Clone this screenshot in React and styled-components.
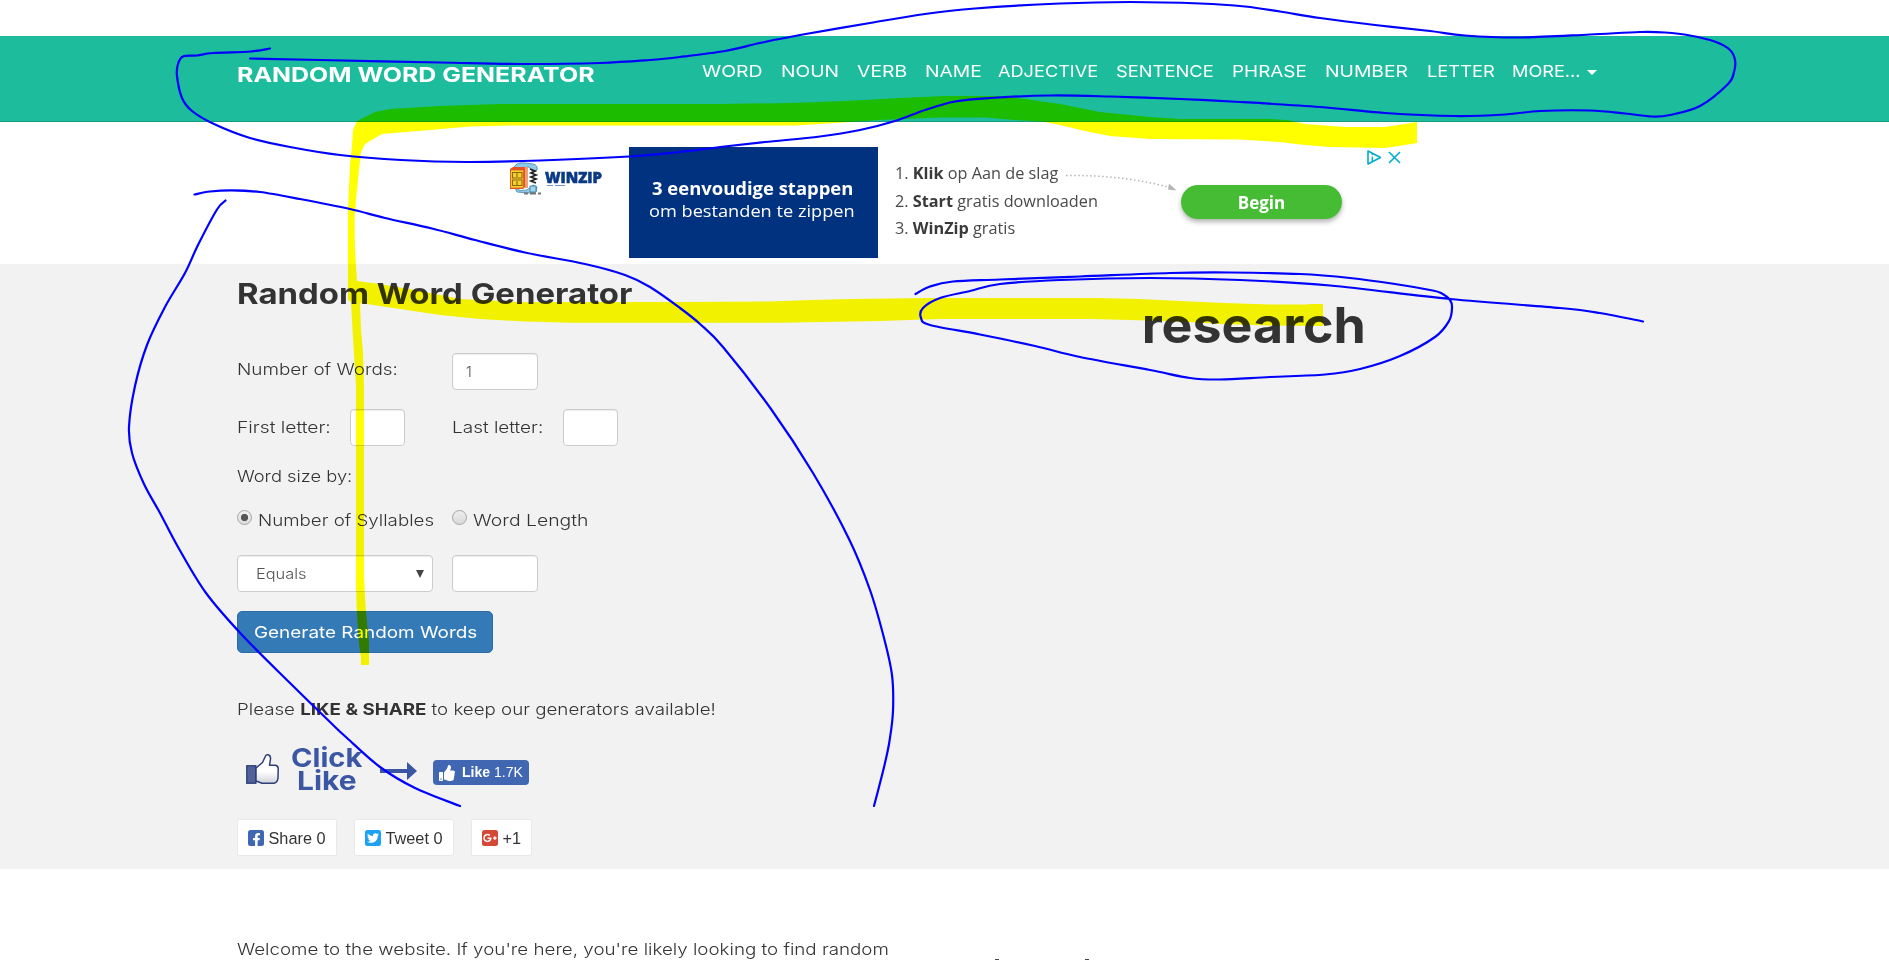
import React from 'react';
import styled, { createGlobalStyle, css } from 'styled-components';
import { FaFacebookF, FaTwitter, FaGooglePlusG, FaThumbsUp } from 'react-icons/fa';

const GlobalStyle = createGlobalStyle`
  * { box-sizing: border-box; }
  html, body { margin: 0; padding: 0; background: #fff; }
  body {
    font-family: Inter, 'Noto Sans', sans-serif;
    font-size: 16.5px;
    line-height: 24px;
    font-weight: 300;
    color: #333;
  }
`;

const wide = css`
  display: inline-block;
  white-space: nowrap;
  transform-origin: ${(p) => p.$origin || 'left'} center;
  transform: scaleX(${(p) => p.$sx || 1.145});
`;

const Page = styled.div`
  position: relative;
  width: 1889px;
  height: 960px;
  overflow: hidden;
  padding-top: 36px;
  background: #fff;
`;

const Header = styled.header`
  display: flex;
  align-items: flex-start;
  height: 86px;
  padding: 23px 0 0 236.5px;
  background: #1cbc9c;
  border-bottom: 1px solid #179c82;
  color: #fff;
`;

const BrandCell = styled.div`
  width: 465.5px;
`;

const Brand = styled.span`
  ${wide}
  font-size: 20.5px;
  line-height: 31px;
  font-weight: 700;
`;

const Nav = styled.nav`
  display: flex;
`;

const NavItem = styled.div`
  width: ${(p) => p.$pitch}px;
  flex: none;
`;

const NavLink = styled.span`
  ${wide}
  font-weight: 400;
`;

const CaretCell = styled.div`
  padding-top: 11px;
`;

const Caret = styled.div`
  width: 0;
  height: 0;
  border: 5px solid transparent;
  border-top-color: #fff;
  border-bottom: 0;
`;

const AdSlot = styled.section`
  display: flex;
  align-items: flex-start;
  height: 142px;
  padding: 25px 0 0 509px;
  font-family: 'Open Sans', sans-serif;
`;

const AdLogo = styled.div`
  width: 120px;
  padding-top: 14px;
  svg { display: block; }
`;

const AdBlue = styled.div`
  width: 249px;
  height: 111px;
  padding: 31px 0 0 20px;
  background: #00327f;
  color: #fff;
  font-size: 17px;
  line-height: 22px;
`;

const AdLine = styled.div`
  width: max-content;
  margin-left: ${(p) => p.$indent || 0}px;
  font-weight: ${(p) => (p.$bold ? 700 : 400)};
  transform: scaleX(${(p) => p.$sx});
  transform-origin: left;
`;

const AdSteps = styled.div`
  position: relative;
  width: 303px;
  padding: 13px 0 0 17px;
  font-size: 16.25px;
  line-height: 27.5px;
  font-weight: 400;
  color: #4a4a4a;
  white-space: nowrap;
  b { font-weight: 700; color: #3a3a3a; }
`;

const StepArrow = styled.svg`
  position: absolute;
  left: 184px;
  top: 22px;
`;

const AdButton = styled.div`
  width: 161px;
  height: 34px;
  margin-top: 38px;
  border-radius: 17px;
  background: #46bc35;
  box-shadow: 0 3px 5px rgba(0, 0, 0, 0.3);
  color: #fff;
  font-size: 17px;
  font-weight: 700;
  line-height: 35px;
  text-align: center;
`;

const AdChoices = styled.svg`
  margin: 2px 0 0 24px;
`;

const Main = styled.main`
  display: grid;
  grid-template-columns: 708px 618px;
  height: 605px;
  padding-left: 237px;
  background: #f2f2f2;
`;

const FormColumn = styled.div`
  padding-top: 10px;
`;

const Title = styled.h1`
  ${wide}
  display: block;
  width: max-content;
  margin: 0 0 39px;
  font-size: 29px;
  line-height: 40px;
  font-weight: 700;
`;

const FormRow = styled.div`
  display: grid;
  grid-template-columns: ${(p) => p.$cols || '215px 86px'};
  align-items: start;
  margin-bottom: ${(p) => p.$after}px;
`;

const Label = styled.div`
  padding-top: ${(p) => p.$drop || 0}px;
`;

const WideText = styled.span`
  ${wide}
  b { font-weight: 700; }
`;

const Field = styled.div`
  display: flex;
  align-items: center;
  justify-content: space-between;
  height: 37px;
  padding: 0 8px 0 13px;
  background: #fff;
  border: 1px solid #ccc;
  border-radius: 4px;
  box-shadow: inset 0 1px 1px rgba(0, 0, 0, 0.075);
  font-size: 14.7px;
  color: #555;
`;

const Select = styled(Field)`
  width: 196px;
  padding: 0 8px 0 18px;
`;

const SelectArrow = styled.div`
  width: 0;
  height: 0;
  border: 4px solid transparent;
  border-top: 8px solid #444;
  border-bottom: 0;
`;

const Option = styled.div`
  display: flex;
  align-items: flex-start;
  gap: 6px;
`;

const Radio = styled.span`
  flex: none;
  width: 15px;
  height: 15px;
  margin-top: 2px;
  border: 1px solid #a5a5a5;
  border-radius: 50%;
  background: ${(p) =>
    p.$on
      ? 'radial-gradient(circle, #555 0 3.3px, transparent 4px), linear-gradient(#f0f0f0, #ddd)'
      : 'linear-gradient(#eee, #d9d9d9)'};
`;

const Submit = styled.div`
  width: 256px;
  height: 42px;
  margin-bottom: 44px;
  padding-left: 15.5px;
  border: 1px solid #2e6da4;
  border-radius: 5px;
  background: #337ab7;
  color: #fff;
  font-weight: 400;
  line-height: 40px;
`;

const LikeRow = styled.div`
  display: flex;
  align-items: flex-start;
  height: 50px;
  margin: 24px 0;
  svg { display: block; flex: none; }
`;

const ThumbCell = styled.div`
  width: 54px;
  padding: 8px 0 0 8px;
`;

const ClickLike = styled.div`
  width: 89px;
  padding-top: 1px;
  font-size: 26px;
  line-height: 23.3px;
  font-weight: 700;
  color: #3b57a4;
`;

const ClickWord = styled.div`
  ${wide}
  display: block;
  margin-left: ${(p) => p.$indent || 0}px;
`;

const ArrowCell = styled.div`
  width: 53px;
  padding-top: 16px;
`;

const LikeButton = styled.div`
  display: flex;
  align-items: center;
  width: 96px;
  height: 25px;
  margin-top: 15px;
  padding-left: 6px;
  border-radius: 4px;
  background: #4267b2;
  color: #fff;
  font: 14px/25px 'Liberation Sans', Arial, sans-serif;
  white-space: nowrap;
  b { margin: 0 4px 0 7px; }
`;

const ShareRow = styled.div`
  display: flex;
  gap: 17px;
`;

const ShareButton = styled.div`
  display: flex;
  align-items: center;
  gap: 4.5px;
  width: ${(p) => p.$w}px;
  height: 37px;
  padding-left: 10px;
  border: 1px solid #e9e9e9;
  border-radius: 2px;
  background: #fff;
  font: 16.3px/36px 'Liberation Sans', Arial, sans-serif;
  white-space: nowrap;
`;

const Badge = styled.span`
  display: flex;
  align-items: ${(p) => p.$align || 'center'};
  justify-content: ${(p) => (p.$align ? 'flex-end' : 'center')};
  width: 16px;
  height: 16px;
  padding-right: ${(p) => (p.$align ? 1 : 0)}px;
  border-radius: 2.5px;
  background: ${(p) => p.$bg};
  color: #fff;
`;

const ResultColumn = styled.div`
  padding-top: 32px;
  text-align: center;
`;

const Result = styled.span`
  ${wide}
  font-size: 49px;
  line-height: 60px;
  font-weight: 700;
`;

const Article = styled.section`
  display: flex;
  height: 91px;
  padding-left: 237px;
`;

const Intro = styled.div`
  width: 758px;
  padding-top: 68px;
`;

/* Tips of the next heading's tallest letters, just above the fold. */
const HeadingTips = styled.div`
  display: flex;
  gap: 86px;
  align-self: flex-end;
`;

const Tip = styled.span`
  width: 4px;
  height: 1px;
  background: #444;
`;

const Ink = styled.svg`
  position: absolute;
  left: 0;
  top: 0;
  pointer-events: none;
  mix-blend-mode: ${(p) => (p.$highlight ? 'multiply' : 'normal')};
`;

const NAV = [
  ['WORD', 78.5, 1.18],
  ['NOUN', 76.5, 1.165],
  ['VERB', 67.5, 1.175],
  ['NAME', 73.5, 1.168],
  ['ADJECTIVE', 117.5, 1.1],
  ['SENTENCE', 116.5, 1.112],
  ['PHRASE', 93, 1.146],
  ['NUMBER', 101.5, 1.17],
  ['LETTER', 85.5, 1.108],
  ['MORE...', 74.5, 1.1],
];

const HEADER_LOOP = [
  [270,48.5],[251,51.5],[213,53],[197,55.5],[183,56.5],[178,64],[177,76],[182,98],[192,111],[214,124],[250,138],[290,147],[340,155],[401,160],[467,162],[540,160.5],[629,156.5],[680,152],[720,147],[765,142],[820,136.5],[860,130],[895,121],[925,110],[955,101.5],[990,98],[1050,95.5],[1110,96.5],[1180,99],[1240,102],[1320,107],[1385,113],[1455,116],[1505,114.5],[1540,111],[1590,110.5],[1625,113.5],[1652,116.5],[1670,115],[1700,106],[1728,84],[1734,72],[1735,60],[1730,50],[1716,42],[1690,35.5],[1665,32.5],[1640,32],[1590,34.5],[1520,37.5],[1465,35.5],[1430,31],[1375,25],[1320,18],[1280,11.5],[1245,6.5],[1200,3.5],[1130,2],[1060,3.5],[975,8.5],[925,14],[870,23],[800,35],[760,43],[725,51],[680,57],[650,60],[600,63],[520,64],[440,62.5],[320,60],[250,58.5],
];

const FORM_LOOP_RIGHT = [
  [194.5,194.5],[210,191.5],[232,190.3],[260,192],[300,199],[350,209],[385,218],[432,228.5],[475,240],[525,252.5],[585,264],[625,275],[650,287],[680,308],[700,324],[723,347],[771,409],[813,473],[849,539],[870,590],[884,638],[892,675],[893,711],[889.5,741],[885,763],[879,787],[874,806],
];

const FORM_LOOP_LEFT = [
  [225.5,200.5],[217,209.5],[198,245],[185,273],[165,307],[147,345],[135,386],[129,427],[132,453],[144,484],[160,513],[178,547],[206,593],[243,636],[290,683],[330,722],[347,738],[380,767],[415,788],[460,806],
];

const RESULT_LOOP = [
  [915.5,294],[930,286.5],[953,281.5],[1000,279.5],[1080,276.5],[1170,273],[1230,272.5],[1300,274],[1350,278],[1395,284],[1430,290],[1441,293],[1450,300],[1452,308],[1449,321],[1435,337],[1400,356],[1360,369],[1325,374.5],[1270,377],[1220,379.5],[1190,378],[1150,370],[1080,357],[1035,346],[980,334.5],[930,325],[921,318],[923,308],[940,298],[970,291],[1000,284],[1060,280],[1150,278],[1240,280],[1330,285.5],[1450,299],[1560,308],[1600,313],[1643,321.5],
];

const MARKER_TOP =
  'M348 210L350 165L352 145L353 130L357 121L375 112L390 109L440 106L500 104H720L790 103L845 101L900 98L945 96H995L1025 99L1060 104L1100 112L1150 117L1180 119H1270L1287 120L1305 124L1345 127H1385L1405 124L1417 122V143L1405 145L1385 148L1330 147L1300 144.5L1280 142L1240 139.5L1150 139L1110 136L1085 131L1060 125L1045 122L1015 120L985 117.5H940L880 120L850 122L820 124L795 125.5H510L470 126.5L430 130L382 134L375 138L365 144L361 152L359 170L356 200L354.5 220L355 250L357 281L380 284L420 291L460 299L520 302H680L768 301.5L812 300L850 299L930 298H1100L1140 299L1180 301L1225 303L1270 304.5H1308V304H1323V326L1270 325.5L1220 324L1180 321.5L1130 320L1092 319H940L880 321L780 322.7H571L525 321.5L480 319L440 315L400 309L380 306L360 303L361 330L363 352L364 385V575L365 597L366 612L369 643V665H361V658L358.5 640L356.5 605L356 580V385L353 338L351 302L348 300Z';

/* Catmull-Rom spline through the pen's sampled points. */
function smooth(points) {
  let d = `M${points[0][0]} ${points[0][1]}`;
  for (let i = 0; i < points.length - 1; i += 1) {
    const a = points[i - 1] || points[i];
    const b = points[i];
    const c = points[i + 1];
    const e = points[i + 2] || c;
    d += `C${b[0] + (c[0] - a[0]) / 6} ${b[1] + (c[1] - a[1]) / 6} ${c[0] - (e[0] - b[0]) / 6} ${c[1] - (e[1] - b[1]) / 6} ${c[0]} ${c[1]}`;
  }
  return d;
}

function WinZipLogo() {
  return (
    <svg width="112" height="36" viewBox="0 0 112 36">
      <path d="M5 6 Q8 1 16 2 L24 3 Q29 4 28 9 L24 11 L20 6 L8 7Z" fill="#8fcbe6" stroke="#3c87ae" strokeWidth=".8" />
      <path d="M6 27 Q11 31 18 29 L24 24 L28 26 L27 31 L20 32 L8 31Z" fill="#8fcbe6" stroke="#3c87ae" strokeWidth=".8" />
      <path d="M1 8 L4 6 H19 L17 9 V25 L14 28 H1Z" fill="#e8502c" />
      <rect x="1.5" y="9" width="13" height="18" fill="#f8cf2c" stroke="#d8601c" strokeWidth=".8" />
      <path d="M3.5 11.5h9.5v5.5h-9.5zM3.5 19h9.5v5.5h-9.5zM8 12v4M8 20v4" fill="none" stroke="#8a6a10" strokeWidth="1.1" />
      <path d="M17.5 6 V27" stroke="#f3a079" strokeWidth="3" />
      <path d="M21 8l5 2-4 2 5 2-5 2 5 2-5 2 5 2" fill="none" stroke="#222" strokeWidth="1.8" />
      <path d="M21 25h6v6h-6z" fill="#9fd5ec" stroke="#39799c" strokeWidth=".8" />
      <path d="M15 32.5h4m2 0h6m2 0h3" stroke="#777" strokeWidth="2" />
      <text x="36" y="22.3" fontFamily="'Open Sans', sans-serif" fontWeight="800" fontSize="16.5" fill="#0b3a85" stroke="#0b3a85" strokeWidth=".6" textLength="57" lengthAdjust="spacingAndGlyphs">WINZIP</text>
      <path d="M38 24.5h6m2 0h10" stroke="#6f95c9" strokeWidth="1" />
    </svg>
  );
}

function ThumbOutline() {
  return (
    <svg width="35" height="33" viewBox="0 0 35 33">
      <defs>
        <linearGradient id="hand" x1="0" y1="0" x2="0" y2="1">
          <stop offset=".6" stopColor="#fff" />
          <stop offset="1" stopColor="#cfd2da" />
        </linearGradient>
      </defs>
      <rect x="1.8" y="12.8" width="9" height="17.4" fill="#526299" stroke="#2f3f78" strokeWidth="1.4" />
      <path d="M11 15 L17.5 9.5 L20.5 3 Q21 1.4 23 1.7 Q25.8 2.2 25.5 6 L24.5 12.3 H30.5 Q33.3 12.8 33.2 16 L33 25 Q32.6 29.5 29 30.2 L17 30.3 L11 28Z" fill="url(#hand)" stroke="#2f3f78" strokeWidth="1.5" strokeLinejoin="round" />
    </svg>
  );
}

export default function App() {
  return (
    <Page>
      <GlobalStyle />
      <Header>
        <BrandCell><Brand $sx={1.217}>RANDOM WORD GENERATOR</Brand></BrandCell>
        <Nav>
          {NAV.map(([name, pitch, sx]) => (
            <NavItem key={name} $pitch={pitch}><NavLink $sx={sx}>{name}</NavLink></NavItem>
          ))}
          <CaretCell><Caret /></CaretCell>
        </Nav>
      </Header>

      <AdSlot>
        <AdLogo><WinZipLogo /></AdLogo>
        <AdBlue>
          <AdLine $bold $indent={3} $sx={1.085}>3 eenvoudige stappen</AdLine>
          <AdLine $sx={1.07}>om bestanden te zippen</AdLine>
        </AdBlue>
        <AdSteps>
          <div>1. <b>Klik</b> op Aan de slag</div>
          <div>2. <b>Start</b> gratis downloaden</div>
          <div>3. <b>WinZip</b> gratis</div>
          <StepArrow width="120" height="26" viewBox="0 0 120 26">
            <path d="M4 6.5 Q62 6 106 18" fill="none" stroke="#b5b5b5" strokeWidth="1.5" strokeDasharray="1.5 2.5" />
            <path d="M107 14.5 L114.5 21.5 L106 20.5Z" fill="#b5b5b5" />
          </StepArrow>
        </AdSteps>
        <AdButton>Begin</AdButton>
        <AdChoices width="36" height="18" viewBox="0 0 36 18">
          <path d="M2 2 L14.5 8.5 L2 15Z" fill="none" stroke="#00aecd" strokeWidth="1.6" strokeLinejoin="round" />
          <path d="M6.3 7.5V12M6.3 4.8V6" stroke="#00aecd" strokeWidth="1.4" />
          <path d="M23 3 L34 14 M34 3 L23 14" stroke="#00aecd" strokeWidth="1.6" />
        </AdChoices>
      </AdSlot>

      <Main>
        <FormColumn>
          <Title $sx={1.135}>Random Word Generator</Title>
          <FormRow $after={19}>
            <Label $drop={4}><WideText>Number of Words:</WideText></Label>
            <Field>1</Field>
          </FormRow>
          <FormRow $cols="113px 55px 47px 111px 55px" $after={18}>
            <Label $drop={6}><WideText $sx={1.165}>First letter:</WideText></Label>
            <Field />
            <span />
            <Label $drop={6}><WideText $sx={1.15}>Last letter:</WideText></Label>
            <Field />
          </FormRow>
          <FormRow $after={20}>
            <Label><WideText $sx={1.11}>Word size by:</WideText></Label>
          </FormRow>
          <FormRow $cols="215px 200px" $after={23}>
            <Option><Radio $on /><WideText $sx={1.135}>Number of Syllables</WideText></Option>
            <Option><Radio /><WideText $sx={1.175}>Word Length</WideText></Option>
          </FormRow>
          <FormRow $after={19}>
            <Select><WideText $sx={1.115}>Equals</WideText><SelectArrow /></Select>
            <Field />
          </FormRow>
          <Submit><WideText>Generate Random Words</WideText></Submit>
          <Label><WideText $sx={1.135}>Please <b>LIKE &amp; SHARE</b> to keep our generators available!</WideText></Label>
          <LikeRow>
            <ThumbCell><ThumbOutline /></ThumbCell>
            <ClickLike>
              <ClickWord $sx={1.12}>Click</ClickWord>
              <ClickWord $sx={1.15} $indent={6}>Like</ClickWord>
            </ClickLike>
            <ArrowCell>
              <svg width="38" height="20" viewBox="0 0 38 20">
                <path d="M0 8h27V1l10 9-10 9v-7H0z" fill="#3b57a4" />
              </svg>
            </ArrowCell>
            <LikeButton><FaThumbsUp size={16} /><b>Like</b>1.7K</LikeButton>
          </LikeRow>
          <ShareRow>
            <ShareButton $w={100}><Badge $bg="#4267b2" $align="flex-end"><FaFacebookF size={13} /></Badge>Share 0</ShareButton>
            <ShareButton $w={100}><Badge $bg="#1da1f2"><FaTwitter size={12} /></Badge>Tweet 0</ShareButton>
            <ShareButton $w={61}><Badge $bg="#d34836"><FaGooglePlusG size={14} /></Badge>+1</ShareButton>
          </ShareRow>
        </FormColumn>
        <ResultColumn>
          <Result $sx={1.06} $origin="center">research</Result>
        </ResultColumn>
      </Main>

      <Article>
        <Intro>
          <WideText $sx={1.138}>Welcome to the website. If you&apos;re here, you&apos;re likely looking to find random</WideText>
        </Intro>
        <HeadingTips><Tip /><Tip /></HeadingTips>
      </Article>

      <Ink $highlight width="1889" height="960">
        <path d={MARKER_TOP} fill="#ff0" />
      </Ink>
      <Ink width="1889" height="960">
        {[HEADER_LOOP, FORM_LOOP_RIGHT, FORM_LOOP_LEFT, RESULT_LOOP].map((points, i) => (
          <path key={i} d={smooth(points)} fill="none" stroke="#00f" strokeWidth="2.2" strokeLinecap="round" />
        ))}
      </Ink>
    </Page>
  );
}
